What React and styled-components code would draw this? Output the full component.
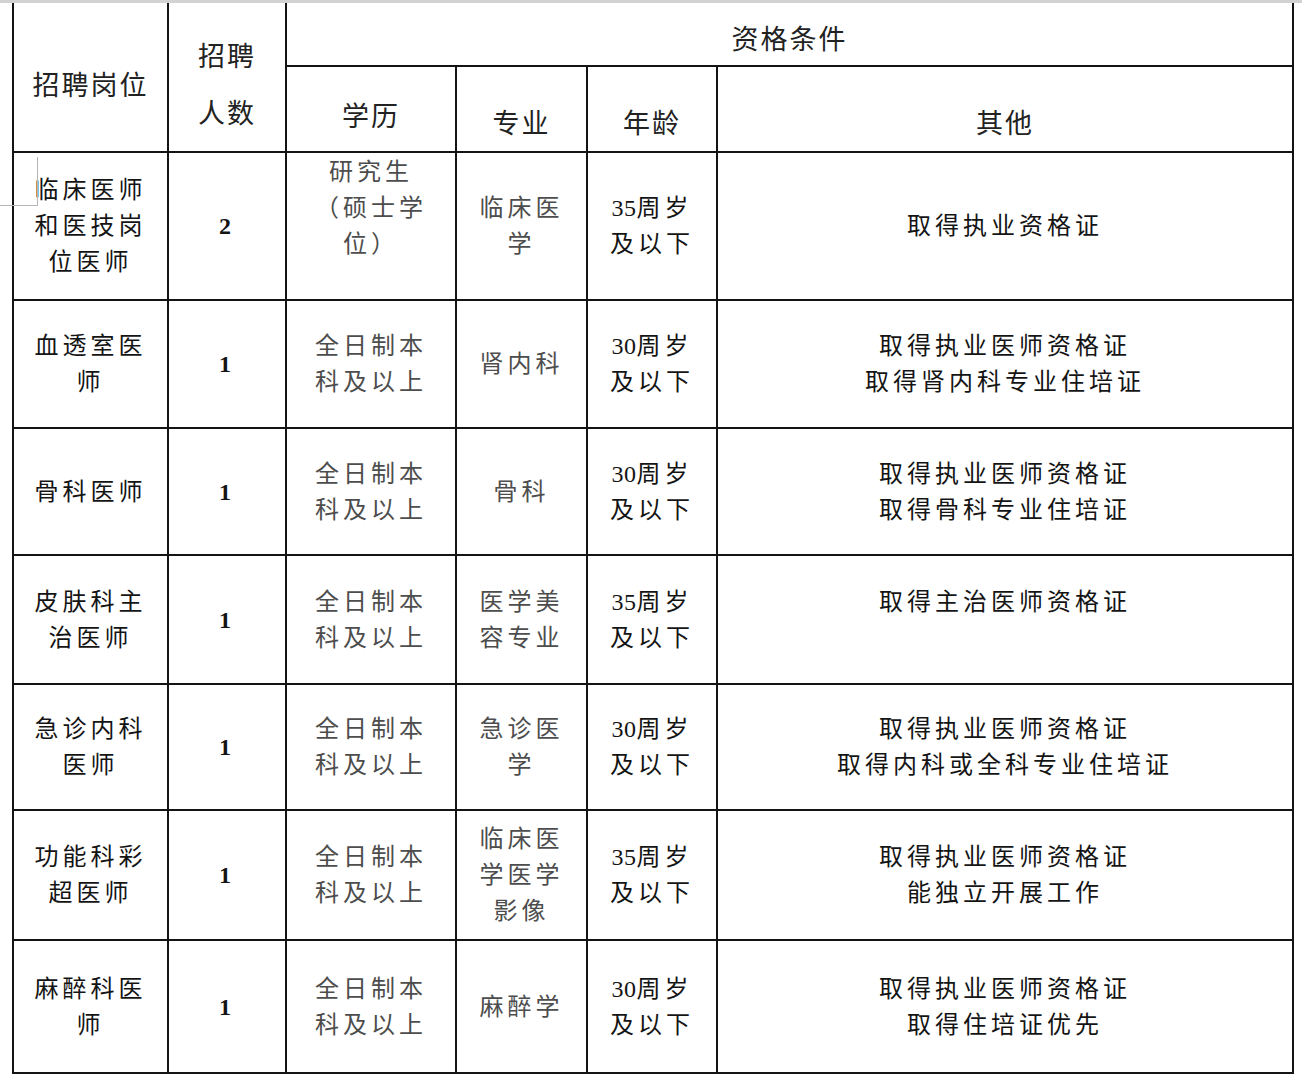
import React from 'react';
import styled, { createGlobalStyle } from 'styled-components';

const GlobalStyle = createGlobalStyle`
  html, body {
    margin: 0;
    padding: 0;
    background: #ffffff;
  }
`;

const BODY_FONT = '"Liberation Serif", "Noto Sans CJK SC", serif';
const HEAD_FONT = '"Noto Sans CJK SC", "Noto Sans", sans-serif';

const rows = [
  {
    post: ['临床医师', '和医技岗', '位医师'],
    count: '2',
    edu: ['研究生', '（硕士学', '位）', ''],
    major: ['临床医', '学'],
    age: '35',
    other: ['取得执业资格证'],
    h: 148,
  },
  {
    post: ['血透室医', '师'],
    count: '1',
    edu: ['全日制本', '科及以上'],
    major: ['肾内科'],
    age: '30',
    other: ['取得执业医师资格证', '取得肾内科专业住培证'],
    h: 128,
  },
  {
    post: ['骨科医师'],
    count: '1',
    edu: ['全日制本', '科及以上'],
    major: ['骨科'],
    age: '30',
    other: ['取得执业医师资格证', '取得骨科专业住培证'],
    h: 127,
  },
  {
    post: ['皮肤科主', '治医师'],
    count: '1',
    edu: ['全日制本', '科及以上'],
    major: ['医学美', '容专业'],
    age: '35',
    other: ['取得主治医师资格证', ''],
    h: 129,
  },
  {
    post: ['急诊内科', '医师'],
    count: '1',
    edu: ['全日制本', '科及以上'],
    major: ['急诊医', '学'],
    age: '30',
    other: ['取得执业医师资格证', '取得内科或全科专业住培证'],
    h: 126,
  },
  {
    post: ['功能科彩', '超医师'],
    count: '1',
    edu: ['全日制本', '科及以上'],
    major: ['临床医', '学医学', '影像'],
    age: '35',
    other: ['取得执业医师资格证', '能独立开展工作'],
    h: 130,
  },
  {
    post: ['麻醉科医', '师'],
    count: '1',
    edu: ['全日制本', '科及以上'],
    major: ['麻醉学'],
    age: '30',
    other: ['取得执业医师资格证', '取得住培证优先'],
    h: 133,
  },
];

const Page = styled.div`
  position: relative;
  border-top: 3px solid #d2d2d2;
  padding-left: 12px;
  background: #fff;
`;

const Table = styled.table`
  border-collapse: collapse;
  table-layout: fixed;
  width: 1280px;
`;

const Row = styled.tr`
  height: ${p => p.$h}px;
`;

const HeadCell = styled.th`
  border: 2px solid #141414;
  border-top: ${p => (p.$top ? '0' : '2px solid #141414')};
  padding: ${p => p.$shift || 0}px 0 0 0;
  font-family: ${HEAD_FONT};
  font-weight: 400;
  font-size: 27px;
  letter-spacing: 2px;
  line-height: ${p => p.$lh || 36}px;
  color: #222;
  text-align: center;
  vertical-align: middle;
`;

const Cell = styled.td`
  border: 2px solid #141414;
  padding: 0;
  font-family: ${BODY_FONT};
  font-size: 24px;
  letter-spacing: 4px;
  line-height: 36px;
  color: ${p => (p.$muted ? '#4d4d4d' : '#141414')};
  font-weight: ${p => (p.$bold ? 700 : 400)};
  text-align: center;
  vertical-align: middle;
`;

const Line = styled.div`
  white-space: nowrap;
  min-height: 36px;
`;

const Digits = styled.span`
  letter-spacing: 0.5px;
`;

// little Word text-boundary mark over the first body cell
const CornerMark = styled.div`
  position: absolute;
  left: 0;
  top: 154px;
  width: 37px;
  height: 48px;
  border-right: 1px solid #b5b5b5;
  border-bottom: 1px solid #b5b5b5;
  pointer-events: none;
`;

const Lines = ({ items }) =>
  items.map((t, i) => <Line key={i}>{t || '\u00a0'}</Line>);

export default function App() {
  return (
    <>
      <GlobalStyle />
      <Page>
        <Table>
          <colgroup>
            <col style={{ width: 155 }} />
            <col style={{ width: 118 }} />
            <col style={{ width: 170 }} />
            <col style={{ width: 131 }} />
            <col style={{ width: 130 }} />
            <col style={{ width: 576 }} />
          </colgroup>
          <thead>
            <Row $h={63}>
              <HeadCell rowSpan={2} $top $shift={14}>招聘岗位</HeadCell>
              <HeadCell rowSpan={2} $top $shift={12} $lh={57}>
                <Line>招聘</Line>
                <Line>人数</Line>
              </HeadCell>
              <HeadCell colSpan={4} $top $shift={8}>资格条件</HeadCell>
            </Row>
            <Row $h={86}>
              <HeadCell $shift={12}>学历</HeadCell>
              <HeadCell $shift={26}>专业</HeadCell>
              <HeadCell $shift={26}>年龄</HeadCell>
              <HeadCell $shift={26}>其他</HeadCell>
            </Row>
          </thead>
          <tbody>
            {rows.map((r, i) => (
              <Row key={i} $h={r.h}>
                <Cell><Lines items={r.post} /></Cell>
                <Cell $bold>{r.count}</Cell>
                <Cell $muted><Lines items={r.edu} /></Cell>
                <Cell $muted><Lines items={r.major} /></Cell>
                <Cell>
                  <Line><Digits>{r.age}</Digits>周岁</Line>
                  <Line>及以下</Line>
                </Cell>
                <Cell><Lines items={r.other} /></Cell>
              </Row>
            ))}
          </tbody>
        </Table>
        <CornerMark />
      </Page>
    </>
  );
}
